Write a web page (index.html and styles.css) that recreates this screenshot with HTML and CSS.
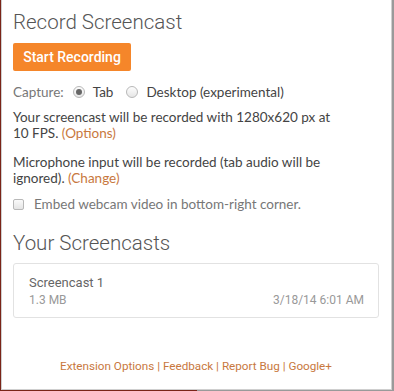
FILE: index.html
```html
<!DOCTYPE html>
<html lang="en">
<head>
  <meta charset="UTF-8" />
  <title>Record Screencast</title>
  <link rel="stylesheet" href="styles.css">
</head>
<body>
  <div class="popup">
    <h1>Record Screencast</h1>
    <button class="record-btn">Start Recording</button>

    <div class="capture">
      <span class="label">Capture:</span>
      <label><span class="radio checked"></span>Tab</label>
      <label><span class="radio"></span>Desktop (experimental)</label>
    </div>

    <p class="note">Your screencast will be recorded with 1280x620 px at 10 FPS. <a href="#">(Options)</a></p>
    <p class="note mic">Microphone input will be recorded (tab audio will be ignored). <a href="#">(Change)</a></p>

    <label class="webcam"><span class="checkbox"></span>Embed webcam video in bottom-right corner.</label>

    <h2>Your Screencasts</h2>
    <div class="cast-card">
      <div class="cast-name">Screencast 1</div>
      <div class="cast-meta">
        <span>1.3 MB</span>
        <span>3/18/14 6:01 AM</span>
      </div>
    </div>

    <div class="footer">
      <a href="#">Extension Options</a> | <a href="#">Feedback</a> | <a href="#">Report Bug</a> | <a href="#">Google+</a>
    </div>
  </div>
</body>
</html>
```

FILE: styles.css
```css
body {
  margin: 0;
  background: linear-gradient(90deg, #7a2418 50%, #9a9a9a 50%);
  width: 394px;
  height: 391px;
  overflow: hidden;
}

.popup {
  box-sizing: border-box;
  margin-left: 1px;
  width: 391px;
  height: 390px;
  background: #fff;
  border: 1px solid #cfcfcf;
  border-top: none;
  padding: 8px 12px 0 11px;
  font-family: Lato, sans-serif;
  font-size: 13.5px;
  color: #444;
}

h1, h2 {
  font-family: Roboto, sans-serif;
  font-weight: 300;
  font-size: 20.5px;
  color: #555;
  margin: 0;
  line-height: 28px;
}

.record-btn {
  display: block;
  margin-top: 7px;
  height: 28px;
  width: 118px;
  background: #f5862a;
  border: none;
  border-radius: 2px;
  color: #fff;
  font-family: Roboto, sans-serif;
  font-weight: 500;
  font-size: 14px;
  padding: 0;
}

.capture {
  display: flex;
  align-items: center;
  gap: 8px;
  margin-top: 13px;
  line-height: 16px;
}

.capture .label {
  color: #777;
  margin-right: 1px;
}

.capture label {
  display: flex;
  align-items: center;
  gap: 8px;
  margin-right: 5px;
}

.radio {
  box-sizing: border-box;
  width: 12px;
  height: 12px;
  border-radius: 50%;
  border: 1px solid #b8b8b8;
  background: linear-gradient(#fdfdfd, #e6e6e6);
  position: relative;
}

.radio.checked::after {
  content: "";
  position: absolute;
  left: 2px;
  top: 2px;
  width: 6px;
  height: 6px;
  border-radius: 50%;
  background: #666;
}

.note {
  margin: 9px 0 0;
  max-width: 330px;
  line-height: 16px;
}

.note.mic {
  margin-top: 13px;
}

a {
  color: #c8783e;
  text-decoration: none;
}

.webcam {
  display: flex;
  align-items: center;
  gap: 10px;
  margin-top: 10px;
  color: #777;
  line-height: 16px;
}

.checkbox {
  box-sizing: border-box;
  width: 11px;
  height: 11px;
  border: 1px solid #b8b8b8;
  border-radius: 2px;
  background: linear-gradient(#fafafa, #e4e4e4);
}

h2 {
  margin-top: 17px;
}

.cast-card {
  margin-top: 6px;
  height: 55px;
  box-sizing: border-box;
  border: 1px solid #e2e2e2;
  border-radius: 3px;
  padding: 10px 14px 0 15px;
  font-family: Roboto, sans-serif;
}

.cast-name {
  font-size: 13px;
  color: #666;
  line-height: 18px;
}

.cast-meta {
  display: flex;
  justify-content: space-between;
  font-size: 12px;
  color: #999;
  line-height: 16px;
}

.footer {
  margin-top: 40px;
  text-align: center;
  font-family: Roboto, sans-serif;
  font-size: 11.7px;
  line-height: 16px;
  color: #c8783e;
}
```
